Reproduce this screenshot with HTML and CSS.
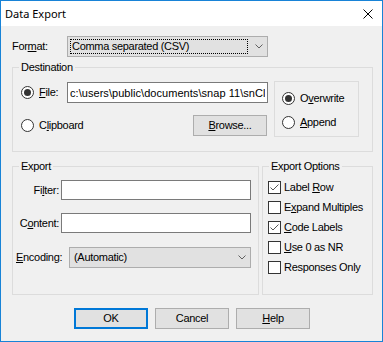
FILE: index.html
```html
<!DOCTYPE html>
<html lang="en">
<head>
    <meta charset="UTF-8">
    <title>Data Export</title>
    <link rel="stylesheet" href="styles.css">
</head>
<body>
    <div class="window">
        <div class="titlebar">
            <span class="title">Data Export</span>
            <svg class="close" width="10" height="10" viewBox="0 0 10 10">
                <path d="M0.5 0.5 L9.5 9.5 M9.5 0.5 L0.5 9.5" stroke="#000" stroke-width="1" fill="none"/>
            </svg>
        </div>

        <div class="client">
            <div class="format-row">
                <span class="format-label">For<u>m</u>at:</span>
                <div class="combo format-combo focused">
                    <div class="combo-value">Comma separated (CSV)</div>
                    <div class="combo-arrow">
                        <svg width="8" height="5" viewBox="0 0 8 5"><polyline points="0.5,0.5 4,4 7.5,0.5" fill="none" stroke="#606060"/></svg>
                    </div>
                </div>
            </div>

            <fieldset class="group dest">
                <legend>Destination</legend>
                <div class="dest-body">
                    <div class="dest-left">
                        <div class="dest-row">
                            <span class="radio on"></span>
                            <span class="file-label"><u>F</u>ile:</span>
                            <input class="text file-path" type="text" value="c:\users\public\documents\snap 11\snClient.csv">
                        </div>
                        <div class="dest-row">
                            <span class="radio"></span>
                            <span>C<u>l</u>ipboard</span>
                            <button class="btn browse"><u>B</u>rowse...</button>
                        </div>
                    </div>
                    <div class="mode-box">
                        <div class="option"><span class="radio on"></span><span>O<u>v</u>erwrite</span></div>
                        <div class="option"><span class="radio"></span><span><u>A</u>ppend</span></div>
                    </div>
                </div>
            </fieldset>

            <div class="lower">
                <fieldset class="group export">
                    <legend>Export</legend>
                    <div class="export-body">
                        <div class="field-row">
                            <span class="field-label">Fi<u>l</u>ter:</span>
                            <input class="text field-input" type="text">
                        </div>
                        <div class="field-row content-row">
                            <span class="field-label">C<u>o</u>ntent:</span>
                            <input class="text field-input" type="text">
                        </div>
                        <div class="field-row encoding-row">
                            <span class="enc-label"><u>E</u>ncoding:</span>
                            <div class="combo enc-combo">
                                <div class="combo-value">(Automatic)</div>
                                <div class="combo-arrow">
                                    <svg width="8" height="5" viewBox="0 0 8 5"><polyline points="0.5,0.5 4,4 7.5,0.5" fill="none" stroke="#606060"/></svg>
                                </div>
                            </div>
                        </div>
                    </div>
                </fieldset>

                <fieldset class="group options">
                    <legend>Export Options</legend>
                    <div class="options-body">
                        <div class="check-row">
                            <span class="checkbox on"><svg width="11" height="11" viewBox="0 0 11 11"><polyline points="1.5,5.5 4,8 9.5,2.5" fill="none" stroke="#555"/></svg></span>
                            <span>Label <u>R</u>ow</span>
                        </div>
                        <div class="check-row">
                            <span class="checkbox"></span>
                            <span>E<u>x</u>pand Multiples</span>
                        </div>
                        <div class="check-row">
                            <span class="checkbox on"><svg width="11" height="11" viewBox="0 0 11 11"><polyline points="1.5,5.5 4,8 9.5,2.5" fill="none" stroke="#555"/></svg></span>
                            <span><u>C</u>ode Labels</span>
                        </div>
                        <div class="check-row">
                            <span class="checkbox"></span>
                            <span><u>U</u>se 0 as NR</span>
                        </div>
                        <div class="check-row">
                            <span class="checkbox"></span>
                            <span>Responses Only</span>
                        </div>
                    </div>
                </fieldset>
            </div>

            <div class="buttons">
                <button class="btn default">OK</button>
                <button class="btn">Cancel</button>
                <button class="btn"><u>H</u>elp</button>
            </div>
        </div>
    </div>
</body>
</html>
```

FILE: styles.css
```css
body {
    margin: 0;
    background: #fff;
    font-family: "Liberation Sans", Arial, sans-serif;
    font-size: 11px;
    color: #000;
}
.window {
    width: 383px;
    height: 342px;
    box-sizing: border-box;
    border: 1px solid #1883d7;
    background: #f0f0f0;
    display: flex;
    flex-direction: column;
}
.titlebar {
    height: 25px;
    flex-shrink: 0;
    background: #fff;
    display: flex;
    align-items: center;
    padding-left: 4px;
}
.title {
    font-family: "Noto Sans", "Open Sans", sans-serif;
    font-size: 11px;
}
.close {
    margin-left: auto;
    margin-right: 9px;
}
.client {
    padding: 10px 9px 0 11px;
    letter-spacing: -0.3px;
    line-height: 13px;
}

/* format */
.format-row {
    display: flex;
    align-items: center;
    height: 21px;
}
.format-label {
    width: 55px;
}
.combo {
    display: flex;
    box-sizing: border-box;
    height: 21px;
    border: 1px solid #adadad;
    background: #e1e1e1;
}
.combo-value {
    flex: 1;
    margin: 2px;
    border: 1px dotted transparent;
    padding-left: 1px;
    display: flex;
    align-items: center;
    white-space: nowrap;
}
.combo.focused .combo-value {
    border-color: #000;
}
.combo-arrow {
    width: 17px;
    display: flex;
    align-items: center;
    justify-content: center;
}
.format-combo {
    width: 201px;
}
.enc-combo {
    width: 182px;
}

/* group boxes */
.group {
    margin: 0;
    padding: 0;
    min-width: 0;
    border: 1px solid #dcdcdc;
}
.group legend {
    padding: 0 2px;
    margin-left: 6px;
    line-height: 13px;
}
.dest {
    margin-top: 4px;
}
.dest-body {
    display: flex;
    padding: 7px 0 14px 8px;
}
.dest-left {
    width: 247px;
}
.dest-row {
    display: flex;
    align-items: center;
    height: 21px;
    margin-top: 1px;
}
.dest-row + .dest-row {
    margin-top: 12px;
}
.file-label {
    width: 28px;
}
.radio {
    width: 13px;
    height: 13px;
    box-sizing: border-box;
    border: 1px solid #333;
    border-radius: 50%;
    background: #fff;
    position: relative;
    flex-shrink: 0;
    margin-right: 5px;
}
.radio.on::after {
    content: "";
    position: absolute;
    left: 2px;
    top: 2px;
    width: 7px;
    height: 7px;
    border-radius: 50%;
    background: #333;
}
.text {
    box-sizing: border-box;
    height: 20px;
    margin: 0;
    padding: 0 2px;
    border: 1px solid #7a7a7a;
    background: #fff;
    font: inherit;
    letter-spacing: inherit;
    color: #000;
    outline: none;
}
.file-path {
    width: 201px;
    height: 21px;
    letter-spacing: 0.05px;
}
.mode-box {
    margin-left: 6px;
    width: 85px;
    height: 56px;
    box-sizing: border-box;
    border: 1px solid #dcdcdc;
    padding: 10px 0 0 7px;
}
.option {
    display: flex;
    align-items: center;
    height: 13px;
}
.option + .option {
    margin-top: 11px;
}

/* lower groups */
.lower {
    display: flex;
    gap: 3px;
    margin-top: 8px;
}
.export {
    width: 247px;
    box-sizing: border-box;
}
.options {
    width: 111px;
    box-sizing: border-box;
}
.export-body {
    padding: 7px 0 26px 0;
}
.field-row {
    display: flex;
    align-items: center;
}
.field-label {
    width: 46px;
    margin-right: 2px;
    text-align: right;
}
.field-input {
    width: 190px;
}
.content-row {
    margin-top: 13px;
}
.encoding-row {
    margin-top: 14px;
}
.enc-label {
    width: 56px;
    box-sizing: border-box;
    padding-left: 3px;
}
.options-body {
    padding: 8px 0 0 5px;
}
.check-row {
    display: flex;
    align-items: center;
    height: 13px;
}
.check-row + .check-row {
    margin-top: 7px;
}
.checkbox {
    width: 13px;
    height: 13px;
    box-sizing: border-box;
    border: 1px solid #333;
    background: #fff;
    flex-shrink: 0;
    margin-right: 3px;
    display: flex;
}

/* buttons */
.buttons {
    display: flex;
    justify-content: center;
    gap: 7px;
    margin-top: 13px;
    padding-right: 1px;
}
.btn {
    width: 74px;
    height: 21px;
    box-sizing: border-box;
    margin: 0;
    padding: 0;
    border: 1px solid #adadad;
    background: #e1e1e1;
    font: inherit;
    letter-spacing: inherit;
    color: #000;
}
.btn.default {
    border: 2px solid #0078d7;
}
.browse {
    margin-left: auto;
    margin-right: 1px;
}
```
